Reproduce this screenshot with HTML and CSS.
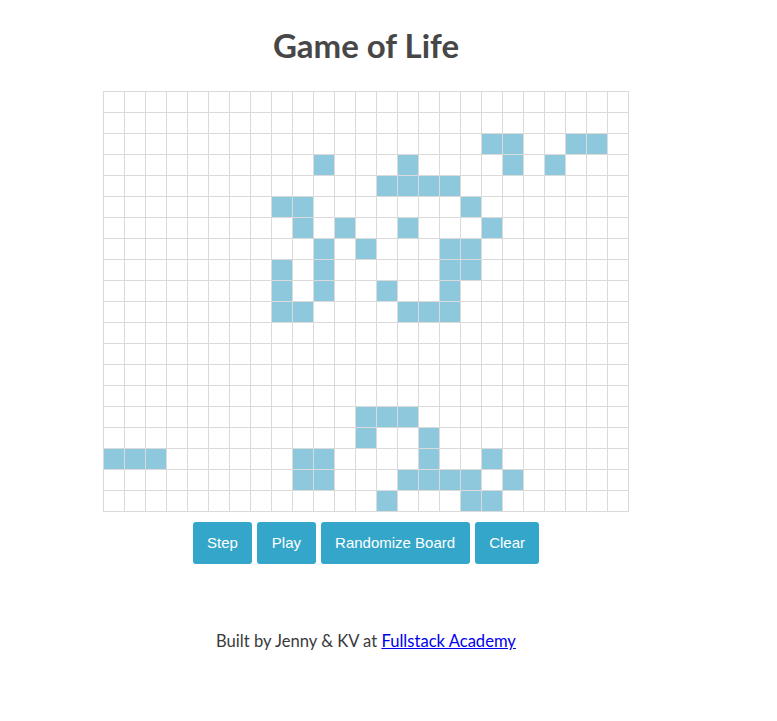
FILE: index.html
```html
<!DOCTYPE html>
<html>
<head>
<meta charset="utf-8">
<title>Game of Life</title>
<link rel="stylesheet" href="styles.css">
</head>
<body>
<div class="page">
  <h1 class="title">Game of Life</h1>
  <div class="board">
    <span></span><span></span><span></span><span></span><span></span><span></span><span></span><span></span><span></span><span></span><span></span><span></span><span></span><span></span><span></span><span></span><span></span><span></span><span></span><span></span><span></span><span></span><span></span><span></span><span></span>
    <span></span><span></span><span></span><span></span><span></span><span></span><span></span><span></span><span></span><span></span><span></span><span></span><span></span><span></span><span></span><span></span><span></span><span></span><span></span><span></span><span></span><span></span><span></span><span></span><span></span>
    <span></span><span></span><span></span><span></span><span></span><span></span><span></span><span></span><span></span><span></span><span></span><span></span><span></span><span></span><span></span><span></span><span></span><span></span><span class="on"></span><span class="on"></span><span></span><span></span><span class="on"></span><span class="on"></span><span></span>
    <span></span><span></span><span></span><span></span><span></span><span></span><span></span><span></span><span></span><span></span><span class="on"></span><span></span><span></span><span></span><span class="on"></span><span></span><span></span><span></span><span></span><span class="on"></span><span></span><span class="on"></span><span></span><span></span><span></span>
    <span></span><span></span><span></span><span></span><span></span><span></span><span></span><span></span><span></span><span></span><span></span><span></span><span></span><span class="on"></span><span class="on"></span><span class="on"></span><span class="on"></span><span></span><span></span><span></span><span></span><span></span><span></span><span></span><span></span>
    <span></span><span></span><span></span><span></span><span></span><span></span><span></span><span></span><span class="on"></span><span class="on"></span><span></span><span></span><span></span><span></span><span></span><span></span><span></span><span class="on"></span><span></span><span></span><span></span><span></span><span></span><span></span><span></span>
    <span></span><span></span><span></span><span></span><span></span><span></span><span></span><span></span><span></span><span class="on"></span><span></span><span class="on"></span><span></span><span></span><span class="on"></span><span></span><span></span><span></span><span class="on"></span><span></span><span></span><span></span><span></span><span></span><span></span>
    <span></span><span></span><span></span><span></span><span></span><span></span><span></span><span></span><span></span><span></span><span class="on"></span><span></span><span class="on"></span><span></span><span></span><span></span><span class="on"></span><span class="on"></span><span></span><span></span><span></span><span></span><span></span><span></span><span></span>
    <span></span><span></span><span></span><span></span><span></span><span></span><span></span><span></span><span class="on"></span><span></span><span class="on"></span><span></span><span></span><span></span><span></span><span></span><span class="on"></span><span class="on"></span><span></span><span></span><span></span><span></span><span></span><span></span><span></span>
    <span></span><span></span><span></span><span></span><span></span><span></span><span></span><span></span><span class="on"></span><span></span><span class="on"></span><span></span><span></span><span class="on"></span><span></span><span></span><span class="on"></span><span></span><span></span><span></span><span></span><span></span><span></span><span></span><span></span>
    <span></span><span></span><span></span><span></span><span></span><span></span><span></span><span></span><span class="on"></span><span class="on"></span><span></span><span></span><span></span><span></span><span class="on"></span><span class="on"></span><span class="on"></span><span></span><span></span><span></span><span></span><span></span><span></span><span></span><span></span>
    <span></span><span></span><span></span><span></span><span></span><span></span><span></span><span></span><span></span><span></span><span></span><span></span><span></span><span></span><span></span><span></span><span></span><span></span><span></span><span></span><span></span><span></span><span></span><span></span><span></span>
    <span></span><span></span><span></span><span></span><span></span><span></span><span></span><span></span><span></span><span></span><span></span><span></span><span></span><span></span><span></span><span></span><span></span><span></span><span></span><span></span><span></span><span></span><span></span><span></span><span></span>
    <span></span><span></span><span></span><span></span><span></span><span></span><span></span><span></span><span></span><span></span><span></span><span></span><span></span><span></span><span></span><span></span><span></span><span></span><span></span><span></span><span></span><span></span><span></span><span></span><span></span>
    <span></span><span></span><span></span><span></span><span></span><span></span><span></span><span></span><span></span><span></span><span></span><span></span><span></span><span></span><span></span><span></span><span></span><span></span><span></span><span></span><span></span><span></span><span></span><span></span><span></span>
    <span></span><span></span><span></span><span></span><span></span><span></span><span></span><span></span><span></span><span></span><span></span><span></span><span class="on"></span><span class="on"></span><span class="on"></span><span></span><span></span><span></span><span></span><span></span><span></span><span></span><span></span><span></span><span></span>
    <span></span><span></span><span></span><span></span><span></span><span></span><span></span><span></span><span></span><span></span><span></span><span></span><span class="on"></span><span></span><span></span><span class="on"></span><span></span><span></span><span></span><span></span><span></span><span></span><span></span><span></span><span></span>
    <span class="on"></span><span class="on"></span><span class="on"></span><span></span><span></span><span></span><span></span><span></span><span></span><span class="on"></span><span class="on"></span><span></span><span></span><span></span><span></span><span class="on"></span><span></span><span></span><span class="on"></span><span></span><span></span><span></span><span></span><span></span><span></span>
    <span></span><span></span><span></span><span></span><span></span><span></span><span></span><span></span><span></span><span class="on"></span><span class="on"></span><span></span><span></span><span></span><span class="on"></span><span class="on"></span><span class="on"></span><span class="on"></span><span></span><span class="on"></span><span></span><span></span><span></span><span></span><span></span>
    <span></span><span></span><span></span><span></span><span></span><span></span><span></span><span></span><span></span><span></span><span></span><span></span><span></span><span class="on"></span><span></span><span></span><span></span><span class="on"></span><span class="on"></span><span></span><span></span><span></span><span></span><span></span><span></span>
  </div>
  <div class="controls">
    <button class="btn">Step</button>
    <button class="btn">Play</button>
    <button class="btn">Randomize Board</button>
    <button class="btn">Clear</button>
  </div>
  <p class="credit">Built by Jenny &amp; KV at <a href="#">Fullstack Academy</a></p>
</div>
</body>
</html>
```
FILE: styles.css
```css
html, body {
  margin: 0;
  padding: 0;
  background: #ffffff;
}

.page {
  width: 732px;
  display: flex;
  flex-direction: column;
  align-items: center;
  font-family: Lato, "Liberation Sans", sans-serif;
}

.title {
  margin: 0;
  padding-top: 25px;
  font-size: 33px;
  line-height: 40px;
  font-weight: 700;
  color: #474747;
}

.board {
  margin-top: 26px;
  display: grid;
  grid-template-columns: repeat(25, 20px);
  grid-auto-rows: 20px;
  gap: 1px;
  padding: 1px;
  background: #dadada;
}

.board span {
  display: block;
  background: #ffffff;
}

.board span.on {
  background: #8ec8dc;
}

.controls {
  margin-top: 10px;
  display: flex;
  gap: 5px;
}

.btn {
  height: 42px;
  padding: 0 14.5px;
  border: none;
  border-radius: 3px;
  background: #34a6c9;
  color: #ffffff;
  font-family: "Liberation Sans", Arial, sans-serif;
  font-size: 15px;
  line-height: 42px;
}

.credit {
  margin: 67px 0 0;
  font-size: 16.6px;
  line-height: 20px;
  color: #3a3a3a;
}

.credit a {
  color: #0000ee;
  text-decoration: underline;
}
```
